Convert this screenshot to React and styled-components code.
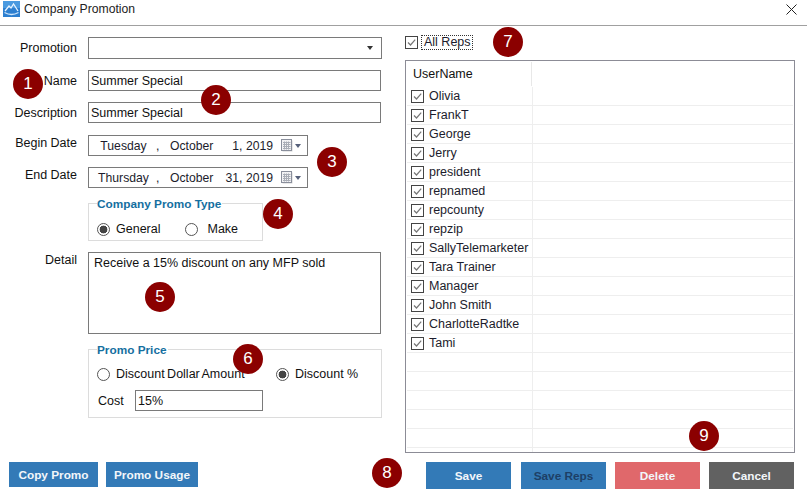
import styled, { createGlobalStyle } from "styled-components";

const GlobalStyle = createGlobalStyle`
  html, body { margin: 0; padding: 0; background: #fff; }
  body { font-family: "Liberation Sans", Arial, sans-serif; font-size: 12.5px; color: #111; }
`;

const Window = styled.div`
  position: relative;
  width: 807px;
  height: 497px;
  overflow: hidden;
  background: #fff;
`;
const TitleBar = styled.header`
  display: flex;
  align-items: center;
  height: 26px;
  padding: 0 10px 7px 3px;
  box-sizing: border-box;
  border-bottom: 1px solid #a0a0a0;
`;
const Title = styled.span`
  margin-left: 4px;
  flex: 1;
  font-size: 12.2px;
  color: #222;
`;
const Body = styled.div`
  display: flex;
  height: 424px;
`;
const LeftColumn = styled.div`
  width: 405px;
  padding-top: 11px;
  box-sizing: border-box;
`;
const RightColumn = styled.div`
  width: 390px;
  padding-top: 9px;
  box-sizing: border-box;
`;
const Row = styled.div`
  display: flex;
  align-items: ${(p) => p.$align || "center"};
  margin-bottom: ${(p) => p.$gap ?? 11}px;
`;
const Label = styled.label`
  width: 77px;
  margin-right: 11px;
  text-align: right;
  flex: none;
  margin-top: ${(p) => p.$top || 0}px;
`;
const SelectBox = styled.div`
  display: flex;
  align-items: center;
  justify-content: flex-end;
  width: 294px;
  height: 22px;
  padding-right: 8px;
  box-sizing: border-box;
  border: 1px solid #7a7a7a;
`;
const Caret = styled.span`
  width: 0;
  height: 0;
  border-left: 3.5px solid transparent;
  border-right: 3.5px solid transparent;
  border-top: 4px solid ${(p) => p.$color || "#333"};
`;
const TextInput = styled.input`
  width: ${(p) => p.$width || 293}px;
  height: 21px;
  padding: 0 2px;
  box-sizing: border-box;
  border: 1px solid #7a7a7a;
  border-radius: 0;
  outline: none;
  font: inherit;
  color: #111;
`;
const DateBox = styled.div`
  display: flex;
  align-items: center;
  width: 220px;
  height: 21px;
  box-sizing: border-box;
  border: 1px solid #7a7a7a;
  font-size: 12.2px;
  color: #1c1c2c;
`;
const Weekday = styled.span`
  width: 66px;
  padding-left: 3px;
  box-sizing: border-box;
  text-align: center;
`;
const Comma = styled.span`
  width: 15px;
  padding-left: 1px;
  box-sizing: border-box;
`;
const Month = styled.span`
  width: 50px;
`;
const Day = styled.span`
  width: 53px;
  text-align: right;
`;
const CalendarWrap = styled.span`
  display: flex;
  align-items: center;
  gap: 2px;
  margin-left: 8px;
`;
const Group = styled.fieldset`
  width: ${(p) => p.$width}px;
  height: ${(p) => p.$height}px;
  margin: 0 0 ${(p) => p.$gap}px 88px;
  padding: 0 0 0 8px;
  box-sizing: border-box;
  border: 1px solid #dcdcdc;
  min-width: 0;
`;
const Legend = styled.legend`
  padding: 1px 1px 0 0;
  font-weight: bold;
  font-size: 11.8px;
  color: #156f9f;
`;
const RadioRow = styled.div`
  display: flex;
  align-items: center;
  margin-top: ${(p) => p.$top || 0}px;
`;
const RadioLabel = styled.label`
  display: flex;
  align-items: center;
  width: ${(p) => p.$width}px;
  flex: none;
  white-space: pre;
  word-spacing: ${(p) => p.$words || 0}px;
`;
const Radio = styled.input.attrs({ type: "radio", readOnly: true })`
  appearance: none;
  width: 13px;
  height: 13px;
  margin: 0 6px 0 0;
  border: 1px solid #555;
  border-radius: 50%;
  background: #fff;
  box-sizing: border-box;
  &:checked {
    background: radial-gradient(circle, #444 0 3.6px, #fff 4.2px);
  }
`;
const CostLabel = styled.span`
  width: 38px;
  padding-left: 1px;
  box-sizing: border-box;
`;
const Textarea = styled.textarea`
  display: block;
  width: 293px;
  height: 82px;
  padding: 3px 5px;
  box-sizing: border-box;
  border: 1px solid #7a7a7a;
  border-radius: 0;
  outline: none;
  resize: none;
  font: inherit;
  color: #111;
`;
const AllReps = styled.div`
  display: flex;
  align-items: center;
  height: 15px;
  margin-bottom: 10px;
`;
const FocusText = styled.span`
  margin-left: 3px;
  padding: 0 1px 0 2px;
  border: 1px dotted #333;
  line-height: 13px;
  color: #1c1c2c;
`;
const Grid = styled.div`
  width: 390px;
  height: 393px;
  box-sizing: border-box;
  border: 1px solid #8c8c96;
  padding: 1px;
  overflow: hidden;
`;
const GridHeader = styled.div`
  display: flex;
  height: 25px;
`;
const HeaderCell = styled.div`
  width: 125px;
  height: 24px;
  padding-left: 6px;
  box-sizing: border-box;
  line-height: 24px;
  border-right: 1px solid #e8e8e8;
`;
const GridRow = styled.div`
  display: flex;
  height: 19px;
  box-sizing: border-box;
  border-bottom: 1px solid #eeeeee;
`;
const NameCell = styled.div`
  display: flex;
  align-items: center;
  width: 126px;
  padding-left: 4px;
  box-sizing: border-box;
  border-right: 1px solid #eeeeee;
  color: #1c1c2c;
  white-space: nowrap;
`;
const CheckBox = styled.span`
  display: inline-flex;
  flex: none;
  width: 13px;
  height: 13px;
  margin-right: ${(p) => p.$gap ?? 5}px;
  box-sizing: border-box;
  border: 1px solid #444;
  background: #fff;
`;
const Footer = styled.footer`
  display: flex;
  align-items: flex-start;
  padding: 12px 13px 0 9px;
`;
const Button = styled.button`
  width: ${(p) => p.$width || 85}px;
  height: ${(p) => p.$height || 27}px;
  margin-left: ${(p) => p.$left || 0}px;
  padding: 0;
  border: 0;
  background: ${(p) => p.$bg || "#337ab7"};
  color: ${(p) => p.$color || "#f2f6fa"};
  font-family: inherit;
  font-size: 11.8px;
  font-weight: bold;
`;
const Badge = styled.span`
  position: absolute;
  left: ${(p) => p.$x - 15}px;
  top: ${(p) => p.$y - 15}px;
  display: flex;
  align-items: center;
  justify-content: center;
  width: 30px;
  height: 30px;
  border-radius: 50%;
  background: #8b0000;
  color: #fff;
  font-size: 17px;
`;

const AppIcon = () => (
  <svg width="17" height="16" viewBox="0 0 17 16">
    <rect width="17" height="16" fill="#2d7fd0" />
    <rect width="17" height="7" fill="#4a9ae0" />
    <path d="M2 10 L6 5 L8 7 L10.5 3 L15 10" fill="none" stroke="#e8f4ff" strokeWidth="1.3" />
    <path d="M1.5 11.5 Q8.5 15.5 15.5 11.5" fill="none" stroke="#cfe6fb" strokeWidth="1.3" />
  </svg>
);

const CloseIcon = () => (
  <svg width="11" height="11" viewBox="0 0 11 11">
    <path d="M0.5 0.5 L10.5 10.5 M10.5 0.5 L0.5 10.5" stroke="#222" strokeWidth="1" />
  </svg>
);

const CalendarIcon = () => (
  <svg width="12" height="13" viewBox="0 0 12 13">
    <rect x="1.5" y="1.5" width="10" height="11" fill="#d4d4d4" />
    <rect x="0.5" y="0.5" width="10" height="11" fill="#f2f2f4" stroke="#8a8f9c" />
    <path d="M2 3.5H9.5M2 5.5H9.5M2 7.5H9.5M2 9.5H9.5M3.5 2.5V10.5M5.5 2.5V10.5M7.5 2.5V10.5" stroke="#a9adb6" />
  </svg>
);

const Check = () => (
  <svg width="11" height="11" viewBox="0 0 11 11">
    <path d="M2 5.5 L4.5 8 L9.2 2.6" fill="none" stroke="#777" strokeWidth="1.2" />
  </svg>
);

const reps = [
  "Olivia", "FrankT", "George", "Jerry", "president", "repnamed", "repcounty",
  "repzip", "SallyTelemarketer", "Tara Trainer", "Manager", "John Smith",
  "CharlotteRadtke", "Tami", "", "", "", "", "", "",
];

const badges = [
  [1, 28, 84], [2, 216, 100], [3, 332, 162], [4, 278, 214], [5, 160, 297],
  [6, 248, 359], [7, 508, 42], [8, 387, 473], [9, 704, 436],
];

function DateField({ weekday, day }) {
  return (
    <DateBox>
      <Weekday>{weekday}</Weekday>
      <Comma>,</Comma>
      <Month>October</Month>
      <Day>{day}, 2019</Day>
      <CalendarWrap>
        <CalendarIcon />
        <Caret $color="#56607a" />
      </CalendarWrap>
    </DateBox>
  );
}

export default function App() {
  return (
    <Window>
      <GlobalStyle />
      <TitleBar>
        <AppIcon />
        <Title>Company Promotion</Title>
        <CloseIcon />
      </TitleBar>
      <Body>
        <LeftColumn>
          <Row>
            <Label>Promotion</Label>
            <SelectBox><Caret /></SelectBox>
          </Row>
          <Row>
            <Label>Name</Label>
            <TextInput defaultValue="Summer Special" />
          </Row>
          <Row $gap={12}>
            <Label>Description</Label>
            <TextInput defaultValue="Summer Special" />
          </Row>
          <Row>
            <Label $top={-5}>Begin Date</Label>
            <DateField weekday="Tuesday" day="1" />
          </Row>
          <Row $gap={8}>
            <Label $top={-5}>End Date</Label>
            <DateField weekday="Thursday" day="31" />
          </Row>
          <Group $width={175} $height={45} $gap={11}>
            <Legend>Company Promo Type</Legend>
            <RadioRow $top={11}>
              <RadioLabel $width={88}><Radio checked />General</RadioLabel>
              <RadioLabel $width={70}><Radio /> Make</RadioLabel>
            </RadioRow>
          </Group>
          <Row $align="flex-start" $gap={8}>
            <Label $top={1}>Detail</Label>
            <Textarea defaultValue="Receive a 15% discount on any MFP sold" />
          </Row>
          <Group $width={294} $height={76} $gap={0}>
            <Legend>Promo Price</Legend>
            <RadioRow $top={10}>
              <RadioLabel $width={179} $words={-1}><Radio />Discount Dollar Amount</RadioLabel>
              <RadioLabel $width={90}><Radio checked />Discount %</RadioLabel>
            </RadioRow>
            <RadioRow $top={9}>
              <CostLabel>Cost</CostLabel>
              <TextInput $width={128} defaultValue="15%" />
            </RadioRow>
          </Group>
        </LeftColumn>
        <RightColumn>
          <AllReps>
            <CheckBox $gap={0}><Check /></CheckBox>
            <FocusText>All Reps</FocusText>
          </AllReps>
          <Grid>
            <GridHeader><HeaderCell>UserName</HeaderCell></GridHeader>
            {reps.map((rep, i) => (
              <GridRow key={i}>
                <NameCell>
                  {rep && <CheckBox><Check /></CheckBox>}
                  {rep}
                </NameCell>
              </GridRow>
            ))}
          </Grid>
        </RightColumn>
      </Body>
      <Footer>
        <Button $width={89} $height={25}>Copy Promo</Button>
        <Button $width={92} $height={25} $left={8}>Promo Usage</Button>
        <Button $left={228}>Save</Button>
        <Button $left={10} $color="#1d3f66">Save Reps</Button>
        <Button $left={9} $bg="#e0686b">Delete</Button>
        <Button $left={9} $bg="#616161">Cancel</Button>
      </Footer>
      {badges.map(([n, x, y]) => (
        <Badge key={n} $x={x} $y={y}>{n}</Badge>
      ))}
    </Window>
  );
}
